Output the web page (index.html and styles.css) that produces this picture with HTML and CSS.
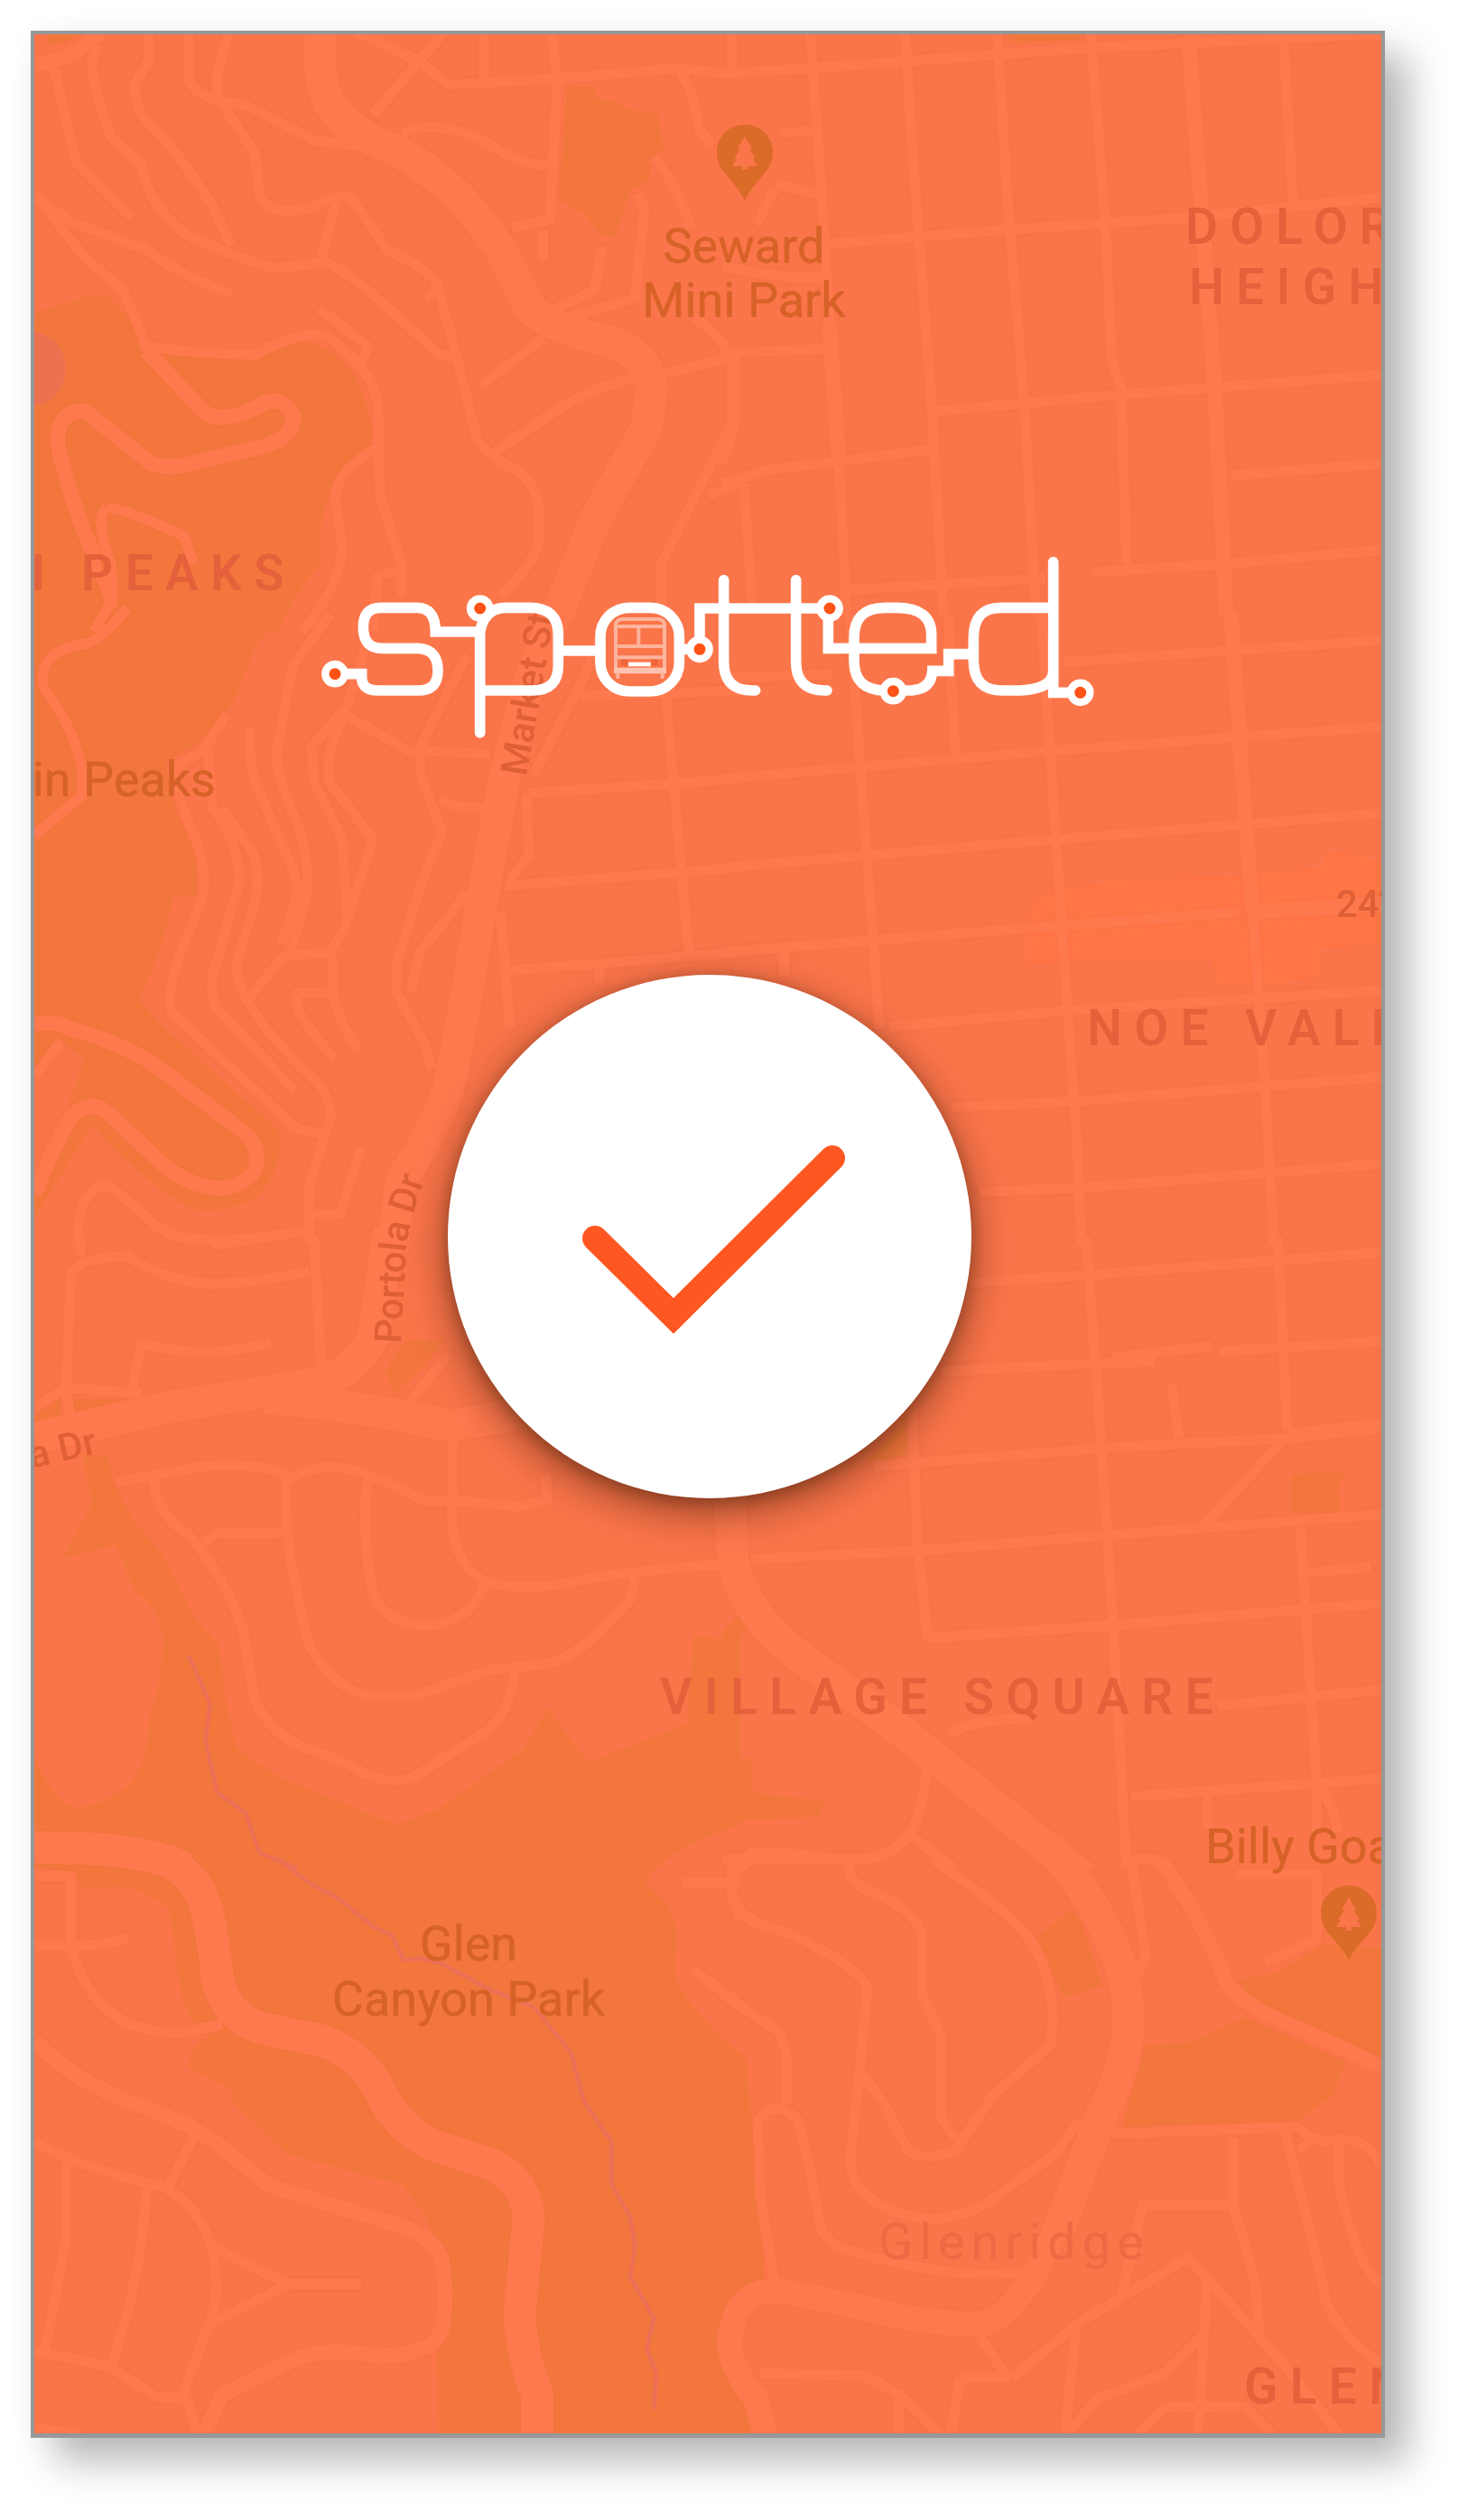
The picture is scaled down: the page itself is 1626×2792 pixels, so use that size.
FILE: index.html
```html
<!DOCTYPE html>
<html lang="en">
<head>
<meta charset="utf-8">
<title>Spotted</title>
<link rel="stylesheet" href="styles.css">
</head>
<body>
<main class="screen">
  <svg class="map" viewBox="38 38 1492 2658" aria-hidden="true">
    <!-- Parks and shaded areas, one group per map tile -->
    <g class="parks">
      <g class="tile-nw">
        <path d="M100 80H175Q140 110 100 112Z"/>
        <path d="M1200 215H1260L1262 245L1300 250L1335 272L1395 282L1405 375L1375 395L1378 440L1335 475L1318 530L1305 590L1275 585L1235 530L1185 495Z"/>
        <path d="M73 780Q110 758 150 750Q190 725 230 735Q280 790 305 860L500 885Q580 870 640 845Q700 860 750 930Q785 1000 788 1100Q720 1160 700 1210L682 1290L675 1410Q640 1440 590 1568H73Z"/>
        <ellipse class="plaza" cx="73" cy="915" rx="66" ry="90"/>
      </g>
      <g class="tile-ne"><path d="M600 80H760L750 98L610 108Z"/></g>
      <g class="tile-w">
        <path d="M73 -20H600L540 85L495 220L420 320L350 370L370 480L415 600L418 700L370 698L340 830L295 960L355 1035L590 1280L592 1320Q590 1400 540 1450Q480 1490 410 1478Q330 1440 195 1270L73 1500Z"/>
        <path class="land" d="M73 1150L130 1060L178 1108L90 1400L73 1440Z"/>
      </g>
      <g class="tile-e">
        <path class="shops" d="M640 800L650 720L720 680L860 660L1085 650L1260 630L1270 590L1340 600L1386 620V820L1255 830V900L1140 920H1040L1030 860L780 860L640 870Z"/>
      </g>
      <g class="tile-sw">
        <path d="M73 445L130 400V450L73 475Z"/>
        <path d="M155 403H265L160 440Z"/>
        <path d="M815 335L860 258L940 258L900 320L835 390Z"/>
        <path d="M715 402L770 382L785 410Z"/>
        <path d="M175 540L230 545L240 610L280 700L345 790L415 950L465 1015L475 1130L500 1265Q540 1310 610 1350L840 1460L930 1420L1110 1270L1160 1170L1245 1305L1455 1210L1468 990L1535 1000L1568 930V1460Q1440 1510 1390 1568H73V1290Q110 1400 160 1418Q230 1410 280 1350Q310 1310 315 1200Q345 1100 345 1000Q340 920 285 880L245 765L130 800L195 665Z"/>
      </g>
      <g class="tile-se">
        <path d="M1195 590L1310 583L1295 625L1298 685H1195Z"/>
        <path d="M300 560L390 440L385 545Z"/>
        <path d="M40 935L60 970L25 1000L18 1290L60 1295V1380L215 1400L205 1440L30 1450L0 1470V980Z"/>
      </g>
      <g class="tile-ssw">
        <path d="M73 -40H1430L1365 55L1415 110Q1435 150 1435 200Q1420 280 1450 320Q1500 400 1568 460V1040Q1520 1080 1522 1150Q1530 1220 1568 1270V1370H930L925 1180L955 1000L905 860Q900 840 850 770L790 755L610 700L490 575L492 545L395 492L415 440L470 400L410 385Q380 350 370 210Q360 120 355 115L300 75L250 65L170 70L160 30L73 20Z"/>
      </g>
      <g class="tile-sse">
        <path d="M0 430L50 470L60 600L90 1010L40 1040L0 1130Z"/>
        <path d="M0 1200L60 1290L75 1370H0Z"/>
        <path d="M660 185L735 120L755 150L800 300L715 330L690 250Z"/>
        <path d="M890 440L980 435L1100 375L1310 480L1285 560L1210 620L840 635Z"/>
        <path d="M1085 285L1160 270L1270 200L1386 210V470L1230 400L1110 340Z"/>
      </g>
    </g>

    <!-- Creek through the canyon -->
    <g class="creek">
      <g class="tile-sw"><path d="M400 1040L445 1160L435 1250L460 1380L520 1430L550 1530L630 1568"/></g>
      <g class="tile-ssw"><path d="M590 0L660 60L720 95L790 160L830 180L855 240L890 235L930 245L1040 310L1130 350L1210 460L1235 570L1295 670V770L1335 850L1345 920L1335 990L1385 1090L1370 1160L1390 1220L1385 1305"/></g>
    </g>

    <g class="roads">
      <g class="tile-nw">
        <path class="highway" d="M680 60Q670 200 700 260Q740 330 830 370Q960 440 1060 620L1120 760Q1150 810 1300 850Q1380 890 1380 970L1370 1060L1260 1290L1180 1530"/>
        <path class="avenue" d="M73 160Q150 150 215 80"/>
        <path class="avenue" d="M310 870L430 1020Q470 1060 560 1000Q600 980 622 1035Q620 1090 550 1110L440 1140Q360 1170 320 1150L180 1020Q120 1020 122 1100Q150 1250 200 1380"/>
        <path d="M115 170L160 400L280 540M195 140Q190 200 235 340L300 410Q310 500 390 580Q540 660 590 665L690 650Q740 670 930 880L970 890M210 110L195 150M315 80V150L285 210Q285 260 310 300Q360 350 450 510L490 610M400 80V200Q420 250 520 260L670 350L760 360M485 80L460 180V240L540 380L550 490Q580 540 660 515Q730 470 750 500L820 620Q930 680 930 720L970 900L1010 1090Q1040 1140 1100 1170Q1140 1210 1140 1260V1350Q1130 1400 1060 1480M715 490L680 640M73 490L150 550L310 620M295 600Q350 670 490 730M73 480L100 520L180 640L260 720Q300 820 310 870M310 860Q430 880 540 880Q650 810 700 840Q790 920 800 1000L805 1230L850 1400V1480M800 1110Q710 1170 710 1240L725 1350Q725 1450 640 1568M675 765L780 860L765 900M225 1260Q200 1290 235 1400L240 1480L200 1568M225 1260Q260 1260 390 1330L410 1400M190 1360L240 1510M850 1410L800 1430L790 1568M1150 840L1020 955M1340 940Q1260 960 1190 1010L1050 1120M1400 930L1568 880M790 285L940 80M755 80L885 150L950 210L1180 195L1430 170L1568 185M850 330Q930 290 1040 360Q1100 410 1160 410M1168 80L1180 200L1165 545L1085 565M1150 570V645M1025 80V200M1440 180Q1470 220 1480 320L1510 360M1385 390Q1430 450 1465 570M1350 480L1365 520L1345 740L1200 790M1275 610L1260 720L1170 770M1550 890V1050L1400 1400V1500M1500 1230L1568 1195M1470 790Q1520 820 1550 890M930 710L900 745"/>
      </g>
      <g class="tile-ne">
        <path class="avenue" d="M980 90L1010 560L1035 950L1060 1530M225 800L245 1140"/>
        <path d="M185 80L210 500L225 800M245 1140L262 1530M385 80L400 380L440 1000L465 1530M578 80L600 500L635 1000L660 1530M775 80L805 550L820 900L838 960L850 1400M1180 90L1200 510M1380 80V100M0 183L200 168L780 118L1386 84M225 605L600 570L980 540L1386 490M450 1020L830 980L1386 930M1070 1180L1386 1150M0 1200L100 1165L250 1145L440 1115M775 1420L1050 1400L1386 1365M250 1465L680 1435M20 875L240 865M10 880L26 900V1060L0 1150M45 1200L65 1530M120 330L190 325M110 455L200 480M110 470L70 560M20 80V170M0 660Q100 690 225 690"/>
      </g>
      <g class="tile-w">
        <path class="highway" d="M1200 -60L1120 170L1070 400L1020 720L980 1000L950 1180Q900 1330 850 1400L830 1580"/>
        <path class="avenue" d="M73 1020Q110 1005 150 1030Q270 1070 340 1130L520 1290Q560 1340 535 1390Q500 1430 450 1425Q380 1410 330 1350L230 1240Q190 1200 150 1250Q110 1330 73 1440"/>
        <path d="M270 -15Q220 60 180 75Q80 90 92 180L135 260Q170 340 175 400V450L73 550M480 250L430 340L365 385Q380 470 415 560Q440 650 430 700L380 850Q350 950 365 990L620 1270Q650 1290 690 1290M440 340L450 480Q505 570 508 660L450 900Q445 950 460 980L625 1185M470 480L540 600Q550 660 540 720L500 870Q500 920 530 970Q560 1040 670 1160Q700 1200 700 1250L655 1420V1568M530 280Q525 380 545 430L600 580Q630 650 630 700L595 820M700 0L620 130L585 350Q590 420 630 520Q655 600 650 700L615 840M780 60L735 230L660 330L665 420L725 560L735 750M735 240Q680 360 700 420L790 560L730 780L700 840L600 850L530 950M705 850V930Q710 1000 760 1085M700 940H630Q620 970 650 1020L710 1110M730 250L880 350M990 100L890 330V400L937 540L895 660L840 870V940L900 1070L915 1130M990 690L890 840L870 940M930 460L970 480H1040M900 340L1040 348M1410 200L1460 860M1120 445L1568 410M1070 675L1568 630M1080 885L1568 840M1060 740L1080 1030M1115 450L1120 600L1080 660M1230 205L1568 190M1270 880V920M1290 -15L1240 150L1130 400M165 1568Q160 1440 220 1415Q250 1430 330 1520L400 1555M655 1530L450 1568M765 1325L720 1490H660M73 1150L130 1060"/>
      </g>
      <g class="tile-e">
        <path class="avenue" d="M1070 0L1090 350L1115 740L1386 720"/>
        <path d="M268 0L290 380L318 820L330 1030M475 0L490 350M670 0L690 350L718 850L745 1300L755 1568M1115 740L1140 1150L1160 1568M720 120L1386 65M0 410L290 380L690 340L1386 280M0 630L300 600L700 560L1386 495M0 840L320 810L700 775L1090 740M350 1025L720 985L1386 935M480 1225L740 1210L1386 1150M540 1435L750 1425L1386 1365M130 840V900M0 160L230 150"/>
      </g>
      <g class="tile-sw">
        <path class="highway" d="M825 -20L790 250Q740 360 640 370L350 425L73 500"/>
        <path class="highway" d="M560 400Q800 425 950 470L1100 440"/>
        <path d="M73 425L140 375L300 390M150 460L140 380L150 100Q160 50 270 50Q350 110 450 118Q550 115 655 85M350 -10Q430 25 600 -5M170 0V50M665 0L680 320M280 380L300 265Q430 310 575 262M245 610L430 570Q580 560 615 600Q680 550 780 590L900 655L960 655L1100 670L1160 655L1155 590M325 600Q330 690 400 740Q480 850 515 980L540 1150Q570 1230 640 1265L740 1310Q820 1370 880 1340L1040 1220Q1080 1170 1090 1080M430 760L460 735H600M610 600Q600 650 615 800L650 1000Q700 1120 780 1140H880L1040 1075L1160 1060Q1220 1040 1270 980L1335 900L1345 840M780 600Q765 700 785 860Q800 960 900 965Q1000 960 1025 860M958 470V660Q950 800 1020 850Q1100 890 1240 850Q1400 820 1530 815M870 410L950 290M1530 815L1568 920"/>
        <path class="highway" d="M60 1515L200 1520Q330 1530 390 1568"/>
      </g>
      <g class="tile-se">
        <path class="highway" d="M15 600L22 800Q40 930 160 1040L380 1230L760 1590"/>
        <path class="avenue" d="M1190 495L1386 470"/>
        <path d="M765 0L790 400L820 930L850 1568M1168 0L1188 480M520 115L770 95L1386 40M460 335L780 315L910 310M820 300L1030 272M1045 285L1386 260M945 365L960 500M320 570L800 525L1200 500M60 800L410 780L820 740L1386 690M440 995L820 965L1386 910M400 430L410 760L432 995H490M1175 510L1010 720M1215 720L1225 900L1250 1360V1480M1225 835L1365 820M1040 1165L1386 1125M860 1390L1386 1345M1020 1390V1470M1260 1370Q1290 1430 1295 1480M480 1240Q500 1200 650 1195M430 1300Q425 1450 380 1500Q330 1560 230 1545Q100 1520 60 1530L20 1568M400 1490L490 1568"/>
      </g>
      <g class="tile-ssw">
        <path class="highway" d="M350 0Q415 40 432 100Q450 160 460 280Q480 385 570 405L680 430Q760 460 800 540Q840 640 920 680L1030 720Q1110 750 1120 850L1100 1080Q1105 1180 1138 1270V1370"/>
        <path class="avenue" d="M73 430Q150 520 270 575Q350 600 450 665L570 775L820 860Q920 890 935 950Q950 1040 935 1120Q910 1180 800 1178Q700 1160 640 1180L470 1270L430 1370"/>
        <path d="M73 40H150V205Q170 300 230 360Q300 420 400 410L470 390M73 205H160Q230 205 270 185M73 670Q140 720 350 780Q430 830 450 930Q470 1040 440 1110L390 1260L420 1370M415 650L355 780M140 720V900L95 1170M310 780Q300 1000 235 1200M73 1170Q200 1190 240 1210L330 1275L390 1280M450 920L610 1008H765M450 1100L610 1010M73 1350L170 1365M1445 55H1568M1550 0V90L1568 140M1465 260L1568 345"/>
      </g>
      <g class="tile-sse">
        <path class="highway" d="M690 -30Q830 160 850 320Q870 450 800 600L700 900"/>
        <path class="avenue-wide" d="M715 850L650 1000Q590 1090 560 1100Q450 1110 300 1065L130 1025Q40 1015 20 1110Q0 1180 70 1280L92 1375"/>
        <path class="avenue" d="M920 0Q1000 120 1060 290Q1090 350 1230 410Q1330 460 1386 495"/>
        <path d="M265 0Q260 60 320 80Q420 130 420 190V320L460 420V610L490 665M60 0Q20 30 20 80Q30 150 130 170Q300 260 305 310Q290 500 270 700Q260 820 430 855Q530 850 600 780L700 700L750 620M440 0Q590 110 640 180Q710 290 690 440L570 560L490 690Q430 720 390 690L340 580L295 510M0 320L120 410L135 460V580M110 1000L80 800L75 620Q110 560 160 620L185 740L205 860Q210 910 270 930Q480 1000 640 980M860 0L890 230L870 280M860 0H920M820 650H870L1210 635Q1250 680 1290 665Q1360 660 1386 730M1185 650L1240 900L1270 1050Q1300 1130 1386 1200M1295 670V760Q1330 960 1386 1010M1210 690L1240 670M1075 660V820L1120 1000L1130 1130M1075 820H885L840 1030M610 1230L750 1100L980 945L1190 1210L1300 1370M1020 990L1000 1370M745 1100L720 1370M500 1230H600L540 1130M500 1230L480 1370M80 1220L290 1225Q370 1250 460 1370M370 1260V1370M720 1370L790 1280L930 1220L1010 1130M870 1370L930 1300H1100L1160 1370M1080 35H1250V190L1140 245M0 0H300"/>
      </g>
    </g>

    <!-- Place names -->
    <g class="district">
      <text x="1313" y="270">DOLORES</text>
      <text x="1317" y="337">HEIGHTS</text>
      <text x="328" y="654" text-anchor="end">TWIN PEAKS</text>
      <text x="1204" y="1158">NOE VALLEY</text>
      <text x="731" y="1899">VILLAGE SQUARE</text>
      <text x="1378" y="2663">GLEN PARK</text>
    </g>
    <text class="hood" x="973" y="2503">Glenridge</text>
    <g class="park-name">
      <text x="824" y="291" text-anchor="middle">Seward</text>
      <text x="824" y="351" text-anchor="middle">Mini Park</text>
      <text x="239" y="882" text-anchor="end">Twin Peaks</text>
      <text x="519" y="2172" text-anchor="middle">Glen</text>
      <text x="519" y="2233" text-anchor="middle">Canyon Park</text>
      <text x="1335" y="2064">Billy Goat</text>
    </g>
    <g class="street">
      <text transform="translate(583 861) rotate(-80.3)">Market St</text>
      <path id="portola" class="guide" d="M444 1489L450 1385Q452 1355 474 1296"/>
      <text textLength="186"><textPath href="#portola">Portola Dr</textPath></text>
      <text transform="translate(109 1610) rotate(-13)" text-anchor="end">Portola Dr</text>
      <text x="1480" y="1016">24<tspan dy="-4">th</tspan></text>
    </g>

    <g class="pin" transform="translate(825 138)">
      <path d="M0 0C17 0 31 13 31 31C31 53 10 61 0 85C-10 61-31 53-31 31C-31 13-17 0 0 0Z"/>
      <path class="tree" d="M0 13L8 27H5L12 38H9L14 46H3V50H-3V46H-14L-9 38H-12L-5 27H-8Z"/>
    </g>
    <g class="pin" transform="translate(1494 2089)">
      <path d="M0 0C17 0 31 13 31 31C31 53 10 61 0 83C-10 61-31 53-31 31C-31 13-17 0 0 0Z"/>
      <path class="tree" d="M0 13L8 27H5L12 38H9L14 46H3V50H-3V46H-14L-9 38H-12L-5 27H-8Z"/>
    </g>
  </svg>

  <svg class="logo" viewBox="0 0 2640 690" role="img" aria-label="spotted">
    <g class="logo-line">
      <path d="M93 440H182V450Q182 495 235 495H370Q435 495 435 430Q435 358 370 355H250Q187 355 187 285Q187 220 245 220H365Q427 220 427 300H575"/>
      <path class="open" d="M575 636V300Q590 220 660 220H740Q835 220 835 310V410Q835 495 750 495H575"/>
      <path d="M835 363H975"/>
      <rect x="975" y="220" width="262" height="278" rx="95"/>
      <path d="M1237 358H1305V222H1735"/>
      <path class="open" d="M1385 128V400Q1385 495 1480 495H1490M1625 128V400Q1625 495 1720 495H1728"/>
      <path d="M1732 222V355H2075V310Q2075 220 1960 220H1920Q1818 220 1818 320V395Q1818 495 1920 495H2010Q2075 490 2078 430H2132V374H2215"/>
      <path d="M2480 220H2305Q2215 220 2215 320V395Q2215 495 2310 495H2370Q2480 490 2480 430"/>
      <path class="open" d="M2480 68V502H2570"/>
    </g>
    <g class="logo-stop">
      <circle cx="93" cy="440" r="32"/><circle cx="575" cy="222" r="32"/>
      <circle cx="1305" cy="358" r="32"/><circle cx="1737" cy="222" r="32"/>
      <circle cx="1948" cy="497" r="32"/><circle cx="2570" cy="502" r="32"/>
    </g>
    <g class="bus">
      <path class="bus-body" d="M1026 430V278Q1026 258 1050 258H1164Q1188 258 1188 278V430M1026 282H1188M1026 348H1188M1102 285V348M1026 385H1188"/>
      <path class="bus-wheels" d="M1020 429H1194"/>
      <path class="bus-body" d="M1033 435V455M1181 435V455"/>
      <path class="bus-lamps" d="M1045 402H1066M1144 402H1165"/>
      <path class="bus-grille" d="M1068 408H1142"/>
    </g>
  </svg>

  <div class="badge">
    <svg class="check" viewBox="0 0 580 580" role="img" aria-label="Done">
      <path d="M163 292L250 378L426 203"/>
    </svg>
  </div>
</main>
</body>
</html>
```
FILE: styles.css
```css
* { box-sizing: border-box; }

body {
  margin: 0;
  padding: 34px;
  height: 2792px;
  background: #fff;
  font-family: Roboto, sans-serif;
}

.screen {
  position: relative;
  display: flex;
  flex-direction: column;
  align-items: center;
  width: 1500px;
  height: 2667px;
  padding-top: 562px;
  border: 4px solid #969899;
  border-bottom-width: 5px;
  background: #fb754a;
  box-shadow: 27px 27px 40px rgba(0, 0, 0, .27), 0 0 30px rgba(0, 0, 0, .035);
}

.map {
  position: absolute;
  inset: 0;
  width: 1492px;
  height: 2658px;
}

/* Map tiles: each one is drawn on its own 1568-unit grid */
.tile-nw { transform: scale(.52296, .44643); }
.tile-ne { transform: translate(800px, 0) scale(.52679, .44643); }
.tile-w { transform: translate(0, 680px) scale(.52296, .44643); }
.tile-e { transform: translate(800px, 680px) scale(.52679, .44643); }
.tile-sw { transform: translate(0, 1370px) scale(.52296, .44643); }
.tile-se { transform: translate(800px, 1370px) scale(.52679, .44643); }
.tile-ssw { transform: translate(0, 2060px) scale(.52296, .46685); }
.tile-sse { transform: translate(800px, 2060px) scale(.52679, .46685); }

.parks { fill: #f3773d; }
.parks .plaza { fill: #ec724f; }
.parks .land { fill: #fb754a; }
.parks .shops { fill: #ff7546; }

.roads {
  fill: none;
  stroke: #ff794e;
  stroke-width: 11.5px;
  stroke-linejoin: round;
  filter: drop-shadow(0 0 2px rgba(210, 95, 55, .16));
}
.roads path { vector-effect: non-scaling-stroke; }
.roads .avenue { stroke-width: 17px; }
.roads .avenue-wide { stroke-width: 28px; }
.roads .highway { stroke-width: 36px; }

.creek { fill: none; stroke: #ed7055; stroke-width: 5px; }
.creek path { vector-effect: non-scaling-stroke; }

.district { fill: #e5613b; font-size: 55px; font-weight: 600; letter-spacing: 13.3px; }
.hood { fill: #ec6a44; font-size: 56px; letter-spacing: 7px; }
.park-name { fill: #d76228; stroke: #d76228; stroke-width: .5px; font-size: 54px; }
.street { fill: #df5f36; font-size: 42px; font-weight: 500; }
.guide { fill: none; }

.pin { fill: #db6b28; }
.pin .tree { fill: #fb754a; }

.logo {
  position: relative;
  width: 880px;
  height: 230px;
  margin-right: 8px;
  flex: none;
}
.logo-line { fill: none; stroke: #fff; stroke-width: 35px; }
.logo-line .open { stroke-linecap: round; }
.logo-stop { fill: #ff5317; stroke: #fff; stroke-width: 25px; }
.bus { fill: none; stroke-width: 12px; }
.bus-body { stroke: #fdb49c; }
.bus-wheels { stroke: #fdc3b0; stroke-width: 20px; }
.bus-lamps { stroke: #f0643a; stroke-width: 20px; }
.bus-grille { stroke: #fff; stroke-width: 14px; }

.badge {
  position: relative;
  width: 580px;
  height: 580px;
  margin-top: 250px;
  margin-left: 4px;
  flex: none;
  border-radius: 50%;
  background: #fff;
  box-shadow: 0 14px 46px rgba(50, 20, 0, .55), 0 4px 16px rgba(50, 20, 0, .25);
}
.check {
  display: block;
  width: 580px;
  height: 580px;
  fill: none;
  stroke: #ff5722;
  stroke-width: 28px;
  stroke-linecap: round;
}
```
